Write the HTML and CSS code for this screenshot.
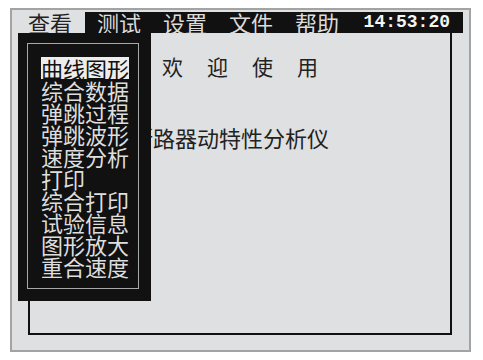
FILE: index.html
```html
<!DOCTYPE html>
<html lang="zh">
<head>
<meta charset="utf-8">
<link rel="stylesheet" href="styles.css">
</head>
<body>
<div class="screen">
  <div class="menubar">
    <div class="menu-active">查看</div>
    <div class="menu-rest">
      <span class="menu-item">测试</span>
      <span class="menu-item">设置</span>
      <span class="menu-item">文件</span>
      <span class="menu-item">帮助</span>
      <span class="clock">14:53:20</span>
    </div>
  </div>
  <div class="main">
    <div class="panel">
      <div class="welcome">欢迎使用</div>
      <div class="title">断路器动特性分析仪</div>
    </div>
    <div class="dropdown">
      <div class="dropdown-inner">
        <div class="item selected">曲线图形</div>
        <div class="item">综合数据</div>
        <div class="item">弹跳过程</div>
        <div class="item">弹跳波形</div>
        <div class="item">速度分析</div>
        <div class="item">打印</div>
        <div class="item">综合打印</div>
        <div class="item">试验信息</div>
        <div class="item">图形放大</div>
        <div class="item">重合速度</div>
      </div>
    </div>
  </div>
</div>
</body>
</html>
```

FILE: styles.css
```css
body {
  margin: 0;
  background: #ffffff;
  font-family: "Noto Sans CJK SC", sans-serif;
}

.screen {
  margin: 8px 0 0 10px;
  width: 461px;
  height: 344px;
  box-sizing: border-box;
  border: 2px solid #a3a3a3;
  background: #dfe0e1;
  padding-top: 2px;
  display: flex;
  flex-direction: column;
}

.menubar {
  display: flex;
  height: 21px;
  margin-right: 6px;
}

.menu-active {
  width: 73px;
  box-sizing: border-box;
  padding-left: 16px;
  font-size: 22px;
  line-height: 21px;
  color: #222;
}

.menu-rest {
  flex: 1;
  background: #111;
  display: flex;
  align-items: center;
  gap: 22px;
  padding: 0 13px 0 12px;
  color: #dcdcdc;
  font-size: 22px;
  line-height: 21px;
}

.clock {
  margin-left: auto;
  font-family: "Liberation Mono", monospace;
  font-weight: bold;
  font-size: 18px;
  color: #f4f4f4;
}

.main {
  position: relative;
  flex: 1;
  display: flex;
  padding: 0 17px 15px 16px;
}

.panel {
  flex: 1;
  border: 2px solid #111;
  border-top: none;
  padding-top: 23px;
  color: #222;
}

.welcome {
  padding-left: 132px;
  font-size: 21px;
  line-height: 21px;
  letter-spacing: 24px;
}

.title {
  margin-top: 49px;
  padding-left: 101px;
  font-size: 22px;
  line-height: 22px;
}

.dropdown {
  position: absolute;
  left: 6px;
  top: 0;
  width: 133px;
  height: 268px;
  box-sizing: border-box;
  background: #111;
  padding: 10px 12px 12px 9px;
}

.dropdown-inner {
  height: 100%;
  box-sizing: border-box;
  border: 1px solid #a8a8a8;
  padding: 13px 0 0 13px;
  display: flex;
  flex-direction: column;
  align-items: flex-start;
}

.item {
  font-size: 22px;
  line-height: 22px;
  color: #dedede;
}

.item.selected {
  background: #ededed;
  color: #111;
}
```
